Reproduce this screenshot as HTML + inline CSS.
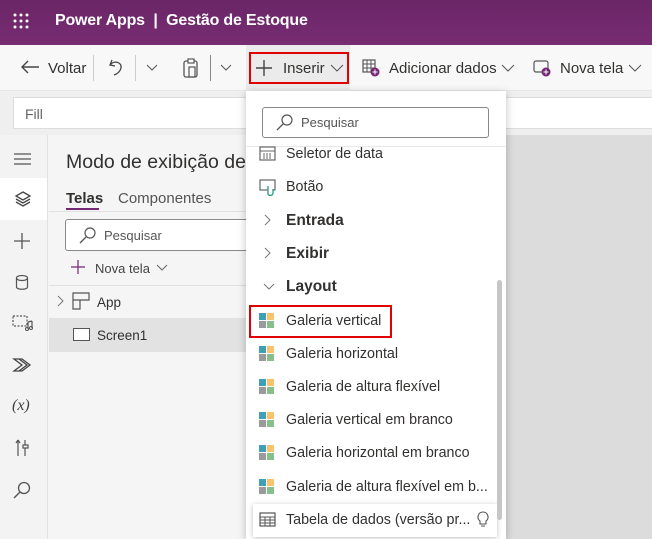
<!DOCTYPE html>
<html><head><meta charset="utf-8"><style>
*{box-sizing:border-box;margin:0;padding:0}
body{width:652px;height:539px;overflow:hidden;font-family:"Liberation Sans",sans-serif;background:#f4f4f4;position:relative;color:#323130}
.abs{position:absolute}
.it{position:absolute;left:40px;font-size:14.3px;color:#323130;white-space:nowrap}
.gi{position:absolute;left:13px;width:16px;height:16px}
.gi i{position:absolute;width:7px;height:7px}
</style></head><body>
<div class="abs" style="left:0;top:0;width:652px;height:45px;background:linear-gradient(#6a2667,#782c72);color:#fff">
 <svg class="abs" style="left:12px;top:12px" width="18" height="18"><g fill="#fff"><circle cx="3" cy="3" r="1.5"/><circle cx="9" cy="3" r="1.5"/><circle cx="15" cy="3" r="1.5"/><circle cx="3" cy="9" r="1.5"/><circle cx="9" cy="9" r="1.5"/><circle cx="15" cy="9" r="1.5"/><circle cx="3" cy="15" r="1.5"/><circle cx="9" cy="15" r="1.5"/><circle cx="15" cy="15" r="1.5"/></g></svg>
 <div class="abs" style="left:55px;top:12px;font-size:16px;font-weight:bold;letter-spacing:-.2px">Power Apps&nbsp; | &nbsp;Gestão de Estoque</div>
</div>
<div class="abs" style="left:0;top:45px;width:652px;height:46px;background:#f8f8f8;border-bottom:1px solid #e6e6e6;font-size:15px">
 <svg class="abs" style="left:20px;top:14px" width="20" height="16"><path d="M19 8H2M8 2L2 8l6 6" stroke="#444" fill="none" stroke-width="1.4"/></svg>
 <div class="abs" style="left:48px;top:15px">Voltar</div>
 <div class="abs" style="left:93px;top:10px;width:1px;height:26px;background:#ccc"></div>
 <svg class="abs" style="left:108px;top:13px" width="16" height="18"><path d="M4 2L2 7l5 1M2 7c4-5 12-3 11 3-1 4-4 6-7 7" stroke="#444" fill="none" stroke-width="1.3"/></svg>
 <div class="abs" style="left:135px;top:10px;width:1px;height:26px;background:#ccc"></div>
 <svg class="abs" style="left:146px;top:19px" width="12" height="8"><path d="M1 1l5 5 5-5" stroke="#555" fill="none"/></svg>
 <svg class="abs" style="left:182px;top:12px" width="18" height="22"><rect x="2" y="4" width="13" height="16" rx="2" stroke="#555" fill="none" stroke-width="1.3"/><rect x="6" y="2" width="6" height="4" stroke="#555" fill="#fff" stroke-width="1.2"/><rect x="7" y="10" width="6" height="10" stroke="#555" fill="none" stroke-width="1.2"/></svg>
 <div class="abs" style="left:210px;top:10px;width:1px;height:26px;background:#888"></div>
 <svg class="abs" style="left:220px;top:19px" width="12" height="8"><path d="M1 1l5 5 5-5" stroke="#555" fill="none"/></svg>
 <div class="abs" style="left:246px;top:0;width:104px;height:46px;background:#ebebeb"></div>
 <div class="abs" style="left:249px;top:7px;width:100px;height:32px;border:2px solid #e00000"></div>
 <svg class="abs" style="left:256px;top:15px" width="16" height="16"><path d="M8 0v16M0 8h16" stroke="#444" stroke-width="1.4"/></svg>
 <div class="abs" style="left:283px;top:15px">Inserir</div>
 <svg class="abs" style="left:330px;top:19px" width="14" height="9"><path d="M1 1l6 6 6-6" stroke="#555" fill="none"/></svg>
 <svg class="abs" style="left:362px;top:14px" width="18" height="18"><rect x="1" y="1" width="12" height="12" stroke="#555" fill="none" stroke-width="1.2"/><path d="M1 5h12M1 9h12M5 1v12M9 1v12" stroke="#555"/><circle cx="13" cy="13" r="4.5" fill="#742774"/><path d="M13 10.5v5M10.5 13h5" stroke="#fff"/></svg>
 <div class="abs" style="left:389px;top:15px">Adicionar dados</div>
 <svg class="abs" style="left:501px;top:19px" width="14" height="9"><path d="M1 1l6 6 6-6" stroke="#555" fill="none"/></svg>
 <svg class="abs" style="left:533px;top:14px" width="18" height="18"><rect x="1" y="2" width="14" height="11" rx="2" stroke="#555" fill="none" stroke-width="1.2"/><circle cx="13" cy="13" r="4.5" fill="#742774"/><path d="M13 10.5v5M10.5 13h5" stroke="#fff"/></svg>
 <div class="abs" style="left:560px;top:15px">Nova tela</div>
 <svg class="abs" style="left:628px;top:19px" width="14" height="9"><path d="M1 1l6 6 6-6" stroke="#555" fill="none"/></svg>
</div>
<div class="abs" style="left:0;top:91px;width:652px;height:44px;background:#efefef"></div>
<div class="abs" style="left:13px;top:97px;width:650px;height:32px;background:#fff;border:1px solid #ddd"></div>
<div class="abs" style="left:25px;top:106px;font-size:14px;color:#666">Fill</div>
<div class="abs" style="left:0;top:135px;width:48px;height:404px;background:#f3f3f3;border-right:1px solid #e2e2e2"></div>
<div class="abs" style="left:0;top:178px;width:47px;height:42px;background:#fff"></div>
<svg class="abs" style="left:13px;top:152px" width="20" height="14"><path d="M1 2h17M1 7h17M1 12h17" stroke="#555" stroke-width="1.2"/></svg>
<svg class="abs" style="left:14px;top:191px" width="18" height="16"><path d="M9 1l7 4-7 4-7-4zM2 8l7 4 7-4M2 11l7 4 7-4" stroke="#444" fill="none" stroke-width="1.3"/></svg>
<svg class="abs" style="left:13px;top:232px" width="18" height="18"><path d="M9 1v16M1 9h16" stroke="#555" stroke-width="1.3"/></svg>
<svg class="abs" style="left:15px;top:274px" width="14" height="17"><ellipse cx="7" cy="4" rx="5.5" ry="2.5" stroke="#555" fill="none" stroke-width="1.2"/><path d="M1.5 4v9c0 3 11 3 11 0V4" stroke="#555" fill="none" stroke-width="1.2"/></svg>
<svg class="abs" style="left:12px;top:314px" width="22" height="18"><rect x="1" y="2" width="14" height="10" stroke="#555" fill="none" stroke-dasharray="2 1.5" stroke-width="1.2"/><path d="M16 8v7M20 7v7M16 8l4-1" stroke="#555" fill="none" stroke-width="1.2"/><circle cx="15" cy="15" r="1.5" stroke="#555" fill="none"/><circle cx="19" cy="14" r="1.5" stroke="#555" fill="none"/></svg>
<svg class="abs" style="left:12px;top:357px" width="22" height="16"><path d="M2 2h8l8 6-8 6H2l8-6zM7 2l8 6-8 6" stroke="#444" fill="none" stroke-width="1.3"/></svg>
<div class="abs" style="left:12px;top:397px;font-size:16px;font-family:'Liberation Serif',serif;color:#444"><i>(x)</i></div>
<svg class="abs" style="left:15px;top:439px" width="14" height="18"><path d="M3 1v16M3 1l-2 3M3 1l2 3M10 1v5M8 6h5v3h-5zM10 9v8" stroke="#555" fill="none" stroke-width="1.2"/></svg>
<svg class="abs" style="left:13px;top:481px" width="18" height="18"><circle cx="11" cy="7" r="5.5" stroke="#555" fill="none" stroke-width="1.3"/><path d="M7 11l-6 6" stroke="#555" stroke-width="1.4"/></svg>
<div class="abs" style="left:49px;top:135px;width:200px;height:404px;background:#f5f5f5"></div>
<div class="abs" style="left:66px;top:151px;font-size:19.5px;color:#323130;white-space:nowrap">Modo de exibição de</div>
<div class="abs" style="left:66px;top:190px;font-size:15px;font-weight:bold">Telas</div>
<div class="abs" style="left:66px;top:208px;width:33px;height:2px;background:#742774"></div>
<div class="abs" style="left:118px;top:190px;font-size:15px;color:#555">Componentes</div>
<div class="abs" style="left:49px;top:211px;width:200px;height:1px;background:#e0e0e0"></div>
<div class="abs" style="left:65px;top:219px;width:190px;height:32px;background:#fff;border:1px solid #888;border-radius:3px"></div>
<svg class="abs" style="left:79px;top:226px" width="18" height="18"><circle cx="11" cy="7" r="5" stroke="#555" fill="none" stroke-width="1.2"/><path d="M7 11l-6 6" stroke="#555" stroke-width="1.3"/></svg>
<div class="abs" style="left:104px;top:228px;font-size:13px;color:#555">Pesquisar</div>
<svg class="abs" style="left:70px;top:259px" width="16" height="16"><path d="M8 1v14M1 8h14" stroke="#742774" stroke-width="1.2"/></svg>
<div class="abs" style="left:95px;top:261px;font-size:13px;color:#444">Nova tela</div>
<svg class="abs" style="left:156px;top:264px" width="12" height="8"><path d="M1 1l5 5 5-5" stroke="#666" fill="none"/></svg>
<div class="abs" style="left:49px;top:285px;width:200px;height:1px;background:#e0e0e0"></div>
<svg class="abs" style="left:57px;top:295px" width="8" height="12"><path d="M1 1l5 5-5 5" stroke="#777" fill="none"/></svg>
<svg class="abs" style="left:72px;top:292px" width="18" height="18"><path d="M1 1h16v7H8v9H1zM1 8h7" stroke="#555" fill="none" stroke-width="1.2"/></svg>
<div class="abs" style="left:97px;top:295px;font-size:13.5px">App</div>
<div class="abs" style="left:49px;top:318px;width:200px;height:34px;background:#e2e2e2"></div>
<div class="abs" style="left:73px;top:328px;width:17px;height:13px;border:1.3px solid #555;background:#fff"></div>
<div class="abs" style="left:97px;top:328px;font-size:13.5px">Screen1</div>
<div class="abs" style="left:505px;top:135px;width:147px;height:404px;background:#dcdcdc"></div>
<div class="abs" style="left:246px;top:91px;width:260px;height:448px;background:#fff;box-shadow:0 2px 8px rgba(0,0,0,.25)">
 <div class="abs" style="left:16px;top:16px;width:227px;height:31px;border:1px solid #888;border-radius:3px"></div>
 <svg class="abs" style="left:30px;top:22px" width="18" height="18"><circle cx="11" cy="7" r="5" stroke="#555" fill="none" stroke-width="1.2"/><path d="M7 11l-6 6" stroke="#555" stroke-width="1.3"/></svg>
 <div class="abs" style="left:55px;top:24px;font-size:13px;color:#555">Pesquisar</div>
 <div class="abs" style="left:0;top:55px;width:260px;height:1px;background:#e8e8e8"></div>
 <svg class="abs" style="left:13px;top:54px" width="17" height="16"><rect x="1" y="2" width="15" height="13" stroke="#666" fill="none" stroke-width="1.2"/><path d="M1 6h15M5 8v6M8 8v6M11 8v6" stroke="#666"/></svg>
 <div class="it" style="top:55px">Seletor de data</div>
 <svg class="abs" style="left:13px;top:88px" width="18" height="18"><rect x="1" y="1" width="15" height="10" stroke="#666" fill="none" stroke-width="1.2"/><path d="M9 7v8c0 2 5 2 5-1v-4" stroke="#2a9a8a" fill="#fff" stroke-width="1.3"/></svg>
 <div class="it" style="top:88px">Botão</div>
 <svg class="abs" style="left:18px;top:123px" width="8" height="12"><path d="M1 1l5 5-5 5" stroke="#777" fill="none"/></svg>
 <div class="it" style="top:121px;font-weight:bold;font-size:15.5px">Entrada</div>
 <svg class="abs" style="left:18px;top:156px" width="8" height="12"><path d="M1 1l5 5-5 5" stroke="#777" fill="none"/></svg>
 <div class="it" style="top:154px;font-weight:bold;font-size:15.5px">Exibir</div>
 <svg class="abs" style="left:17px;top:192px" width="12" height="8"><path d="M1 1l5 5 5-5" stroke="#777" fill="none"/></svg>
 <div class="it" style="top:187px;font-weight:bold;font-size:15.5px">Layout</div>
 <div class="abs" style="left:3px;top:214px;width:143px;height:33px;border:2px solid #e00000"></div>
 <div class="gi" style="top:222px"><i style="left:0;top:0;background:#3ea0b5"></i><i style="left:8px;top:0;background:#f7c46c"></i><i style="left:0;top:8px;background:#9a9a9a"></i><i style="left:8px;top:8px;background:#86bf8a"></i></div>
 <div class="it" style="top:222px">Galeria vertical</div>
 <div class="gi" style="top:255px"><i style="left:0;top:0;background:#3ea0b5"></i><i style="left:8px;top:0;background:#f7c46c"></i><i style="left:0;top:8px;background:#9a9a9a"></i><i style="left:8px;top:8px;background:#86bf8a"></i></div>
 <div class="it" style="top:255px">Galeria horizontal</div>
 <div class="gi" style="top:288px"><i style="left:0;top:0;background:#3ea0b5"></i><i style="left:8px;top:0;background:#f7c46c"></i><i style="left:0;top:8px;background:#9a9a9a"></i><i style="left:8px;top:8px;background:#86bf8a"></i></div>
 <div class="it" style="top:288px">Galeria de altura flexível</div>
 <div class="gi" style="top:321px"><i style="left:0;top:0;background:#3ea0b5"></i><i style="left:8px;top:0;background:#f7c46c"></i><i style="left:0;top:8px;background:#9a9a9a"></i><i style="left:8px;top:8px;background:#86bf8a"></i></div>
 <div class="it" style="top:321px">Galeria vertical em branco</div>
 <div class="gi" style="top:354px"><i style="left:0;top:0;background:#3ea0b5"></i><i style="left:8px;top:0;background:#f7c46c"></i><i style="left:0;top:8px;background:#9a9a9a"></i><i style="left:8px;top:8px;background:#86bf8a"></i></div>
 <div class="it" style="top:354px">Galeria horizontal em branco</div>
 <div class="gi" style="top:388px"><i style="left:0;top:0;background:#3ea0b5"></i><i style="left:8px;top:0;background:#f7c46c"></i><i style="left:0;top:8px;background:#9a9a9a"></i><i style="left:8px;top:8px;background:#86bf8a"></i></div>
 <div class="it" style="top:388px">Galeria de altura flexível em b...</div>
 <div class="abs" style="left:7px;top:413px;width:244px;height:33px;background:#fff;box-shadow:0 1px 5px rgba(0,0,0,.25)"></div>
 <svg class="abs" style="left:13px;top:421px" width="17" height="15"><rect x="1" y="1" width="15" height="13" stroke="#555" fill="none" stroke-width="1.2"/><path d="M1 5h15M1 8h15M1 11h15M6 5v9M11 5v9" stroke="#555"/></svg>
 <div class="it" style="top:421px">Tabela de dados (versão pr...</div>
 <svg class="abs" style="left:231px;top:420px" width="12" height="18"><path d="M6 1a5 5 0 0 0-3 9v3h6v-3a5 5 0 0 0-3-9zM4 15h4" stroke="#555" fill="none" stroke-width="1.1"/></svg>
 <div class="abs" style="left:251px;top:189px;width:5px;height:240px;background:#c6c6c6;border-radius:3px"></div>
</div>
</body></html>
